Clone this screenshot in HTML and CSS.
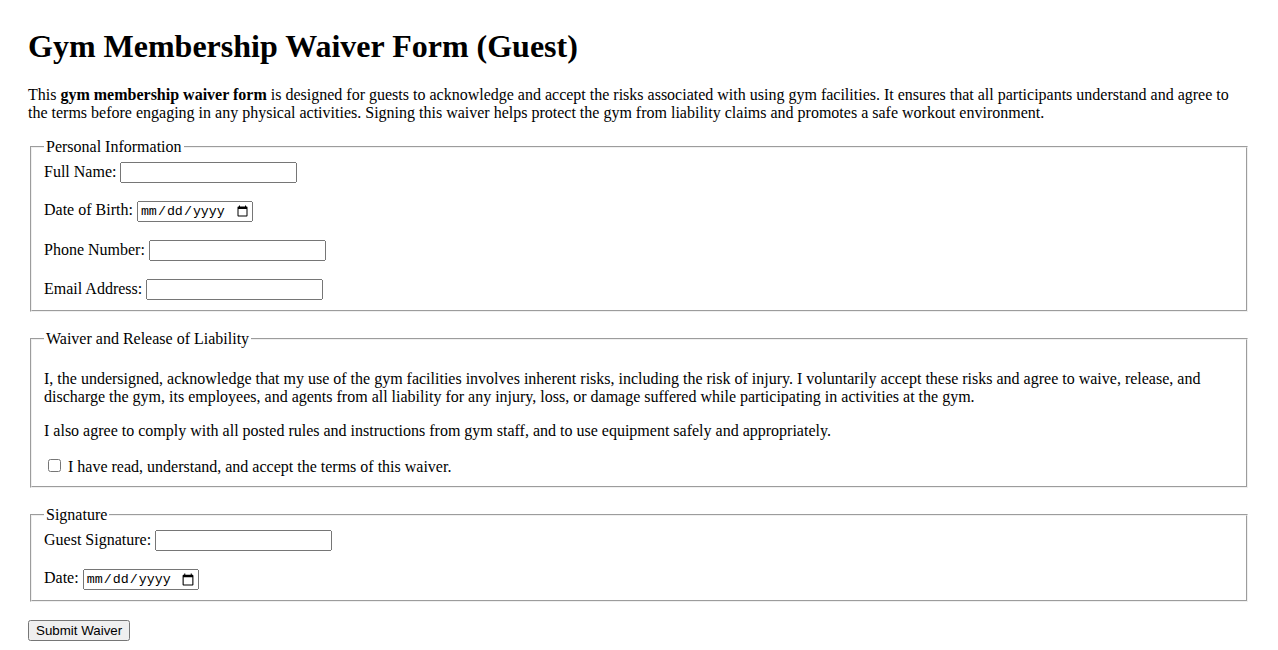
FILE: index.html
```html
<!DOCTYPE html>
<html lang="en">
<head>
    <meta charset="UTF-8">
    <meta name="viewport" content="width=device-width, initial-scale=1.0">
    <title>Gym Membership Waiver Form (Guest)</title>
    <link rel="stylesheet" href="styles.css">
</head>
<body>
    <h1>Gym Membership Waiver Form (Guest)</h1>
    <p>This <strong>gym membership waiver form</strong> is designed for guests to acknowledge and accept the risks associated with using gym facilities. It ensures that all participants understand and agree to the terms before engaging in any physical activities. Signing this waiver helps protect the gym from liability claims and promotes a safe workout environment.</p>

    <form>
        <fieldset class="section">
            <legend>Personal Information</legend>
            <label for="fullName">Full Name:</label>
            <input type="text" id="fullName" name="fullName"><br><br>

            <label for="dob">Date of Birth:</label>
            <input type="date" id="dob" name="dob"><br><br>

            <label for="phone">Phone Number:</label>
            <input type="tel" id="phone" name="phone"><br><br>

            <label for="email">Email Address:</label>
            <input type="email" id="email" name="email">
        </fieldset>

        <fieldset class="section">
            <legend>Waiver and Release of Liability</legend>
            <p>I, the undersigned, acknowledge that my use of the gym facilities involves inherent risks, including the risk of injury. I voluntarily accept these risks and agree to waive, release, and discharge the gym, its employees, and agents from all liability for any injury, loss, or damage suffered while participating in activities at the gym.</p>
            <p>I also agree to comply with all posted rules and instructions from gym staff, and to use equipment safely and appropriately.</p>
            <p class="agree">
                <input type="checkbox" id="agree" name="agree">
                <label for="agree">I have read, understand, and accept the terms of this waiver.</label>
            </p>
        </fieldset>

        <fieldset class="section">
            <legend>Signature</legend>
            <label for="signature">Guest Signature:</label>
            <input type="text" id="signature" name="signature"><br><br>

            <label for="date">Date:</label>
            <input type="date" id="date" name="date">
        </fieldset>

        <button type="submit" class="submit-btn">Submit Waiver</button>
    </form>
</body>
</html>
```

FILE: styles.css
```css
body {
    font-family: "Liberation Serif", "Times New Roman", serif;
    font-size: 16px;
    color: #000;
    background-color: #fff;
    padding: 20px;
}

h1 {
    margin-top: 0;
}

.section {
    margin-bottom: 18px;
    border: 2px groove #f0f0f0;
}

.agree {
    margin-bottom: 0;
}

input[type="text"],
input[type="tel"],
input[type="email"] {
    box-sizing: border-box;
    width: 177px;
    font-family: "Liberation Sans", Arial, sans-serif;
}

input[type="date"] {
    box-sizing: border-box;
    width: 116px;
    font-family: "Liberation Mono", monospace;
}

.submit-btn {
    font-family: "Liberation Sans", Arial, sans-serif;
    font-size: 13.33px;
}
```
